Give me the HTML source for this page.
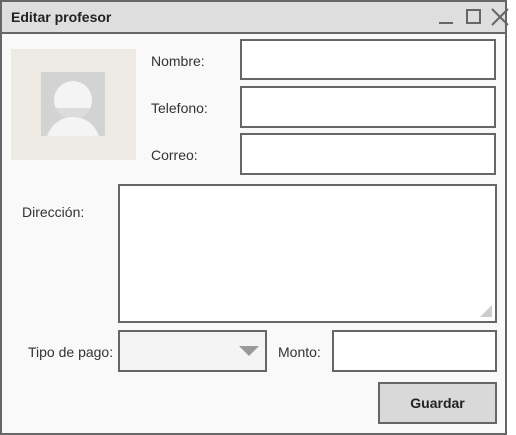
<!DOCTYPE html>
<html><head><style>
body{margin:0;width:516px;height:435px;background:#fff;font-family:"Liberation Sans",sans-serif;position:relative;overflow:hidden}
.a{position:absolute;box-sizing:border-box}
.in{border:2px solid #666;background:#fff}
.lb{font-size:14px;color:#333}
</style></head><body>
<div class="a" style="left:0;top:0;width:507px;height:435px;border:2px solid #666;background:#f9f9f9"></div>
<div class="a" style="left:0;top:0;width:507px;height:34px;border:2px solid #666;background:#dedede"></div>
<div class="a" style="left:11px;top:9px;font-size:14px;font-weight:bold;color:#222">Editar profesor</div>
<div class="a" style="left:439px;top:22px;width:14px;height:2px;background:#666"></div>
<div class="a" style="left:466px;top:9px;width:15px;height:15px;border:2px solid #666"></div>
<svg class="a" style="left:490px;top:7px" width="22" height="20"><path d="M2 2L18 18M18 2L2 18" stroke="#666" stroke-width="2"/></svg>
<div class="a" style="left:11px;top:49px;width:125px;height:111px;background:#eeebe5"></div>
<div class="a" style="left:41px;top:72px;width:64px;height:64px;background:#d3d3d3;overflow:hidden">
<div class="a" style="left:13px;top:9px;width:38px;height:38px;border-radius:50%;background:#f4f4f4;overflow:hidden">
<div class="a" style="left:0;top:27px;width:38px;height:12px;background:#dcdcdc"></div>
</div>
<div class="a" style="left:5px;top:45px;width:54px;height:40px;border-radius:27px 27px 0 0;background:#f4f4f4"></div>
</div>
<div class="a lb" style="left:151px;top:53px">Nombre:</div>
<div class="a lb" style="left:151px;top:100px">Telefono:</div>
<div class="a lb" style="left:151px;top:147px">Correo:</div>
<div class="a in" style="left:240px;top:39px;width:256px;height:41px"></div>
<div class="a in" style="left:240px;top:86px;width:256px;height:42px"></div>
<div class="a in" style="left:240px;top:133px;width:256px;height:42px"></div>
<div class="a lb" style="left:22px;top:204px">Dirección:</div>
<div class="a in" style="left:118px;top:184px;width:379px;height:139px"></div>
<svg class="a" style="left:480px;top:305px" width="12" height="12"><path d="M12 0L12 12L0 12Z" fill="#ccc"/></svg>
<div class="a lb" style="left:28px;top:344px">Tipo de pago:</div>
<div class="a in" style="left:118px;top:330px;width:149px;height:42px;background:#f4f4f4"></div>
<svg class="a" style="left:239px;top:346px" width="20" height="10"><path d="M0 0H20L10 10Z" fill="#999"/></svg>
<div class="a lb" style="left:278px;top:344px">Monto:</div>
<div class="a in" style="left:332px;top:330px;width:165px;height:42px"></div>
<div class="a" style="left:378px;top:382px;width:119px;height:42px;border:2px solid #666;background:#d9d9d9;font-size:14px;font-weight:bold;color:#222;text-align:center;line-height:38px">Guardar</div>
</body></html>
